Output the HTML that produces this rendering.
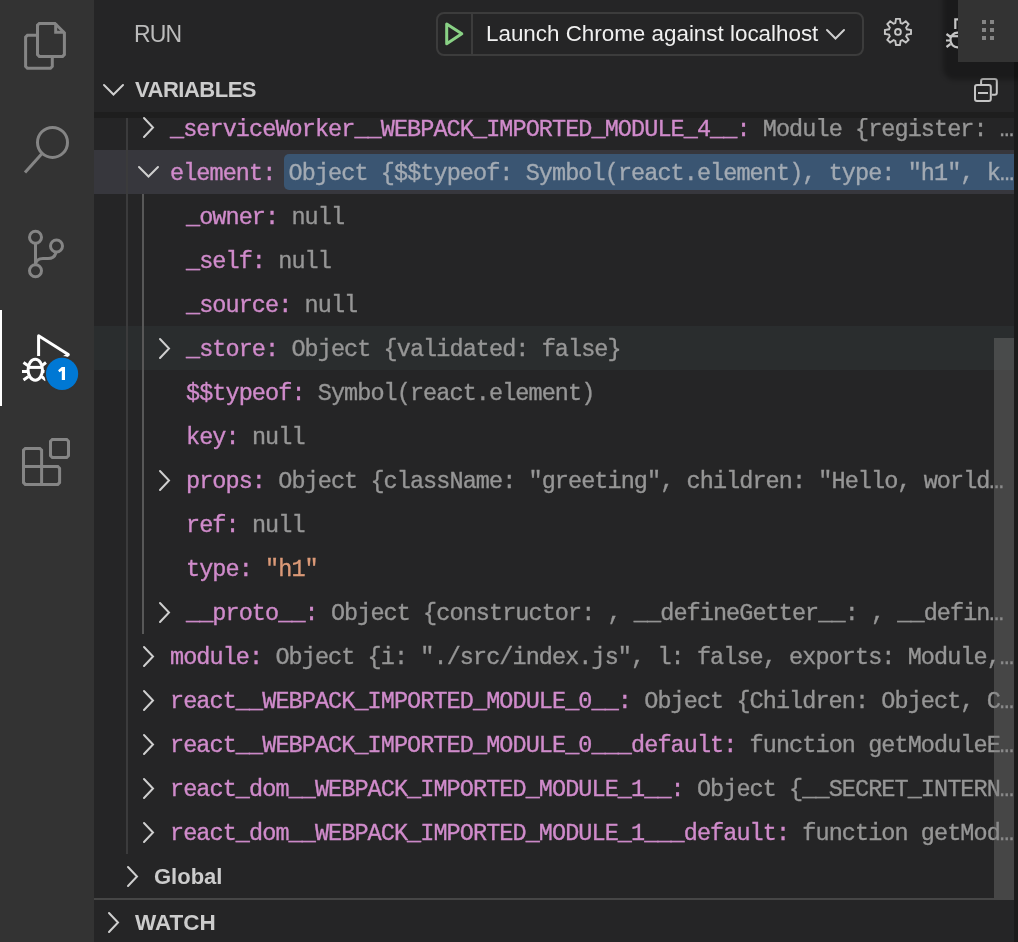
<!DOCTYPE html>
<html><head><meta charset="utf-8">
<style>
*{margin:0;padding:0;box-sizing:border-box}
html,body{width:1018px;height:942px;overflow:hidden;background:#252526}
body{position:relative;font-family:"Liberation Sans",sans-serif}
.abs{position:absolute}
#act{left:0;top:0;width:94px;height:942px;background:#333333}
#side{left:94px;top:0;width:920px;height:942px;background:#252526}
#edge{left:1014px;top:0;width:4px;height:942px;background:#1b1b1b}
.row{position:absolute;left:94px;width:920px;height:44px}
.t{position:absolute;top:0;height:44px;line-height:44px;font-family:"Liberation Mono",monospace;font-size:23.5px;letter-spacing:-0.93px;white-space:pre;color:#969696;will-change:transform;margin-top:2px;margin-left:-0.4px;-webkit-text-stroke-width:0.35px}
.n{color:#d08bcb}
.s{color:#dc9a78}
.hdr{position:absolute;will-change:transform;font-weight:bold;color:#cccccc;font-size:21.5px;line-height:44px;height:44px}
svg{position:absolute;left:0;top:0;overflow:visible}
</style></head>
<body>
<div id="act" class="abs"></div>
<div id="side" class="abs"></div>

<!-- rows backgrounds -->
<div class="abs" style="left:94px;top:150px;width:920px;height:44px;background:#37373d"></div>
<div class="abs" style="left:94px;top:326px;width:920px;height:44px;background:#2a2d2e"></div>
<div class="abs" style="left:284px;top:154px;width:730px;height:36px;background:#3a5572;border-radius:5px 0 0 5px"></div>

<!-- indent guides -->
<div class="abs" style="left:126px;top:112px;width:2px;height:742px;background:#3b3b3c"></div>
<div class="abs" style="left:142px;top:194px;width:2px;height:440px;background:#585858"></div>

<!-- rows text -->
<div class="t" style="left:170.3px;top:106px"><span class="n">_serviceWorker__WEBPACK_IMPORTED_MODULE_4__:</span> Module {register: …</div>
<div class="t" style="left:170.3px;top:150px"><span class="n">element:</span> <span style="color:#a2aab3">Object {$$typeof: Symbol(react.element), type: "h1", k…</span></div>
<div class="t" style="left:186.2px;top:194px"><span class="n">_owner:</span> null</div>
<div class="t" style="left:186.2px;top:238px"><span class="n">_self:</span> null</div>
<div class="t" style="left:186.2px;top:282px"><span class="n">_source:</span> null</div>
<div class="t" style="left:186.2px;top:326px"><span class="n">_store:</span> Object {validated: false}</div>
<div class="t" style="left:186.2px;top:370px"><span class="n">$$typeof:</span> Symbol(react.element)</div>
<div class="t" style="left:186.2px;top:414px"><span class="n">key:</span> null</div>
<div class="t" style="left:186.2px;top:458px"><span class="n">props:</span> Object {className: "greeting", children: "Hello, world…</div>
<div class="t" style="left:186.2px;top:502px"><span class="n">ref:</span> null</div>
<div class="t" style="left:186.2px;top:546px"><span class="n">type:</span> <span class="s">"h1"</span></div>
<div class="t" style="left:186.2px;top:590px"><span class="n">__proto__:</span> Object {constructor: , __defineGetter__: , __defin…</div>
<div class="t" style="left:170.3px;top:634px"><span class="n">module:</span> Object {i: "./src/index.js", l: false, exports: Module,…</div>
<div class="t" style="left:170.3px;top:678px"><span class="n">react__WEBPACK_IMPORTED_MODULE_0__:</span> Object {Children: Object, C…</div>
<div class="t" style="left:170.3px;top:722px"><span class="n">react__WEBPACK_IMPORTED_MODULE_0___default:</span> function getModuleE…</div>
<div class="t" style="left:170.3px;top:766px"><span class="n">react_dom__WEBPACK_IMPORTED_MODULE_1__:</span> Object {__SECRET_INTERN…</div>
<div class="t" style="left:170.3px;top:810px"><span class="n">react_dom__WEBPACK_IMPORTED_MODULE_1___default:</span> function getMod…</div>

<!-- header shadow -->
<div class="abs" style="left:94px;top:0;width:920px;height:112px;background:#252526"></div>
<div class="abs" style="left:94px;top:112px;width:920px;height:6px;background:#1e1e1e"></div>

<!-- titles -->
<div class="abs" style="left:133.6px;top:12px;font-size:23px;letter-spacing:-0.9px;line-height:44px;color:#bbbbbb;will-change:transform">RUN</div>
<div class="hdr" style="left:135px;top:67.5px;font-size:22px;letter-spacing:-0.5px">VARIABLES</div>
<div class="hdr" style="left:154px;top:855px;font-size:22px">Global</div>
<div class="abs" style="left:94px;top:898px;width:920px;height:2px;background:#464646"></div>
<div class="hdr" style="left:134.5px;top:901px;font-size:22.5px">WATCH</div>



<!-- dropdown -->
<div class="abs" style="left:436px;top:12px;width:428px;height:44px;border:2px solid #3c3c3c;border-radius:8px"></div>
<div class="abs" style="left:471px;top:14px;width:2px;height:40px;background:#3c3c3c"></div>
<div class="abs" style="left:486px;top:12px;font-size:22.4px;line-height:44px;color:#f0f0f0;will-change:transform">Launch Chrome against localhost</div>

<!-- scrollbar -->
<div class="abs" style="left:994px;top:338px;width:20px;height:560px;background:rgba(121,121,121,0.4)"></div>
<div id="edge" class="abs"></div>

<svg width="1018" height="942" viewBox="0 0 1018 942" fill="none">
  <!-- chevrons -->
  <g stroke="#cfcfcf" stroke-width="2" fill="none" stroke-linecap="round">
    <path d="M104 85 L113.5 94.5 L123 85"/>
    <path d="M144 118 L153 127.5 L144 137"/>
    <path d="M139 167 L148.5 176.5 L158 167"/>
    <path d="M160 339 L169 348.5 L160 358"/>
    <path d="M160 471 L169 480.5 L160 490"/>
    <path d="M160 603 L169 612.5 L160 622"/>
    <path d="M144 647 L153 656.5 L144 666"/>
    <path d="M144 691 L153 700.5 L144 710"/>
    <path d="M144 735 L153 744.5 L144 754"/>
    <path d="M144 779 L153 788.5 L144 798"/>
    <path d="M144 823 L153 832.5 L144 842"/>
    <path d="M128 867 L137 876.5 L128 886"/>
    <path d="M109 913 L118 922.5 L109 932"/>
    <path d="M827 30 L835.5 38.5 L844 30"/>
  </g>
  <!-- activity icons -->
  <g stroke="#858585" stroke-width="3" fill="none" stroke-linejoin="miter">
    <path d="M37.5 34.8 L37.5 25.2 L39.3 23.4 L55 23.4 L64.4 32.8 L64.4 54.6 L62.6 56.4 L39.3 56.4 L37.5 54.6 Z"/>
    <path d="M55.7 23.4 L55.7 32.3 L64.4 32.3"/>
    <path d="M37.5 35.3 L27.4 35.3 L25.6 37.1 L25.6 66.5 L27.4 68.3 L50.5 68.3 L52.3 66.5 L52.3 56.4"/>
    <circle cx="52.5" cy="142.4" r="15"/>
    <path d="M42.5 153 L25 172.6"/>
    <circle cx="35.5" cy="237.2" r="6"/>
    <circle cx="35.5" cy="270.7" r="6"/>
    <circle cx="56.5" cy="246" r="6"/>
    <path d="M35.5 243.2 L35.5 264.7"/>
    <path d="M56 252 Q55 258.5 48 258.5 L43 258.5 Q36.5 258.5 35.5 264"/>
    <path d="M23.5 466.5 L23.5 450.2 L25.3 448.4 L39.8 448.4 L41.6 450.2 L41.6 484.4 L25.3 484.4 L23.5 482.6 Z"/>
    <path d="M23.5 466.5 L57.8 466.5 L59.6 468.3 L59.6 482.6 L57.8 484.4 L41.6 484.4"/>
    <path d="M52.3 439.5 L66.7 439.5 L68.5 441.3 L68.5 455.7 L66.7 457.5 L52.3 457.5 L50.5 455.7 L50.5 441.3 Z"/>
  </g>
  <!-- active debug icon -->
  <g stroke="#ffffff" stroke-width="3" fill="none">
    <path d="M38.6 356 L38.6 335.8 L68.3 354.6 L62 358.5" stroke-linejoin="round"/>
    <ellipse cx="35.25" cy="369.75" rx="7.2" ry="10.5"/>
    <path d="M28.5 367.4 L42 367.4"/>
    <path d="M22 371.4 L28 371.4 M42.5 371.4 L46 371.4"/>
    <path d="M23.5 362.5 L28.5 366 M23.5 380 L28.5 376.5 M46 362.5 L41.5 366 M46 380 L41.5 376.5"/>
  </g>
  <circle cx="62.05" cy="373.85" r="17.8" fill="#333333"/>
  <circle cx="62.05" cy="373.85" r="16.1" fill="#0078d4"/>
  <!-- gear -->
  <g stroke="#c5c5c5" stroke-width="1.9" fill="none">
    <path id="gear" d="M895.30 23.05 L895.99 18.91 L899.93 18.91 L900.62 23.05 L902.38 23.78 L905.79 21.34 L908.58 24.13 L906.14 27.54 L906.87 29.30 L911.01 29.99 L911.01 33.93 L906.87 34.62 L906.14 36.38 L908.58 39.79 L905.79 42.58 L902.38 40.14 L900.62 40.87 L899.93 45.01 L895.99 45.01 L895.30 40.87 L893.54 40.14 L890.13 42.58 L887.34 39.79 L889.78 36.38 L889.05 34.62 L884.91 33.93 L884.91 29.99 L889.05 29.30 L889.78 27.54 L887.34 24.13 L890.13 21.34 L893.54 23.78 Z"/>
    <circle cx="897.96" cy="31.96" r="2.9"/>
  </g>
  <!-- collapse all -->
  <g stroke="#c5c5c5" stroke-width="2" fill="none">
    <path d="M981.1 84 L981.1 81 Q981.1 78.9 983.1 78.9 L994.8 78.9 Q996.8 78.9 996.8 80.9 L996.8 92.8 Q996.8 94.8 994.8 94.8 L991.8 94.8"/>
    <rect x="975" y="85" width="15.8" height="16.1" rx="2"/>
    <path d="M978 93 L988 93"/>
  </g>
  <!-- green play -->
  <path d="M446.7 24 L446.7 43.7 L461.8 33.85 Z" stroke="#89d185" stroke-width="3" stroke-linejoin="round"/>
</svg>
<div class="abs" style="left:0;top:310px;width:2px;height:96px;background:#ffffff"></div>
<svg width="1018" height="942" viewBox="0 0 1018 942"><path d="M61.8 367.1 L65 367.1 L65 380.1 L61.8 380.1 L61.8 370.8 L59.4 372.3 L58.1 370.3 Z" fill="#ffffff"/></svg>
<!-- debug toolbar -->
<div class="abs" style="left:943px;top:-20px;width:90px;height:100px;background:rgba(0,0,0,0.28);border-radius:12px;filter:blur(2px)"></div>
<svg width="1018" height="942" viewBox="0 0 1018 942" fill="none">
  <g stroke="#c5c5c5" stroke-width="2.2">
    <path d="M955.3 29 L955.3 19.3 L962 19.3"/>
    <ellipse cx="957.5" cy="40" rx="7" ry="7.3"/>
    <path d="M950 36.2 L964 36.2"/>
    <path d="M946 40.5 L950 40.5 M946.5 34 L950.5 37 M946.5 47 L950.5 44"/>
  </g>
</svg>
<div class="abs" style="left:958px;top:-10px;width:80px;height:72px;background:#333333"></div>
<svg width="1018" height="942" viewBox="0 0 1018 942">
  <g fill="#858585">
    <rect x="982" y="20" width="4" height="4"/><rect x="990" y="20" width="4" height="4"/>
    <rect x="982" y="28" width="4" height="4"/><rect x="990" y="28" width="4" height="4"/>
    <rect x="982" y="36" width="4" height="4"/><rect x="990" y="36" width="4" height="4"/>
  </g>
</svg>
</body></html>
